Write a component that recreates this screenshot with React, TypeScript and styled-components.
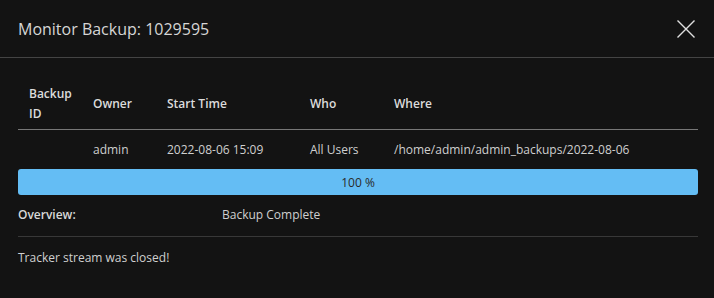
import React from 'react';
import styled, { createGlobalStyle } from 'styled-components';

const GlobalStyle = createGlobalStyle`
  html, body {
    margin: 0;
    padding: 0;
    background: #131313;
  }
  body {
    font-family: "Open Sans", "Noto Sans", sans-serif;
    color: #d8d8d8;
  }
`;

const Modal = styled.div`
  width: 714px;
  height: 298px;
  background: #131313;
  box-sizing: border-box;
`;

const Header = styled.div`
  display: flex;
  align-items: center;
  justify-content: space-between;
  height: 58px;
  padding: 0 18px;
  border-bottom: 1px solid #444;
  box-sizing: border-box;
`;

const Title = styled.h2`
  margin: 0;
  font-size: 16px;
  font-weight: 400;
  color: #d6d6d6;
`;

const CloseButton = styled.button`
  background: none;
  border: none;
  padding: 0;
  width: 20px;
  height: 20px;
  display: flex;
  align-items: center;
  justify-content: center;
  cursor: pointer;
  color: #e0e0e0;
`;

const Body = styled.div`
  padding: 18px 16px 0 18px;
`;

const Table = styled.table`
  width: 680px;
  border-collapse: collapse;
  table-layout: fixed;
  font-size: 12px;
  line-height: 20px;
`;

const Th = styled.th<{ $width?: string }>`
  box-sizing: border-box;
  width: ${({ $width }) => $width || 'auto'};
  text-align: left;
  font-weight: 600;
  color: #dcdcdc;
  padding: 8px 4px 5px 11px;
  vertical-align: middle;
  border-bottom: 1px solid #777;
`;

const Td = styled.td`
  padding: 10px 4px 9px 11px;
  color: #cfcfcf;
  white-space: nowrap;
`;

const ProgressTrack = styled.div`
  width: 680px;
  height: 26px;
  border-radius: 3px;
  background: #64bdf4;
  display: flex;
  align-items: center;
  justify-content: center;
  font-size: 12px;
  color: #2a2a2a;
`;

const OverviewRow = styled.div`
  display: grid;
  grid-template-columns: 204px 1fr;
  width: 680px;
  padding: 10px 0 11px;
  font-size: 12px;
  line-height: 20px;
  border-bottom: 1px solid #383838;
`;

const OverviewLabel = styled.span`
  font-weight: 600;
  color: #d8d8d8;
`;

const OverviewValue = styled.span`
  color: #cfcfcf;
`;

const StatusText = styled.p`
  margin: 0;
  padding-top: 11px;
  font-size: 12px;
  line-height: 20px;
  color: #d0d0d0;
`;

const CloseIcon = () => (
  <svg width="18" height="18" viewBox="0 0 18 18" fill="none" stroke="currentColor" strokeWidth="1.4">
    <path d="M0.5 0.5 L17.5 17.5 M17.5 0.5 L0.5 17.5" />
  </svg>
);

export default function App() {
  return (
    <>
      <GlobalStyle />
      <Modal>
        <Header>
          <Title>Monitor Backup: 1029595</Title>
          <CloseButton aria-label="Close">
            <CloseIcon />
          </CloseButton>
        </Header>
        <Body>
          <Table>
            <thead>
              <tr>
                <Th $width="64px">Backup ID</Th>
                <Th $width="74px">Owner</Th>
                <Th $width="143px">Start Time</Th>
                <Th $width="84px">Who</Th>
                <Th>Where</Th>
              </tr>
            </thead>
            <tbody>
              <tr>
                <Td></Td>
                <Td>admin</Td>
                <Td>2022-08-06 15:09</Td>
                <Td>All Users</Td>
                <Td>/home/admin/admin_backups/2022-08-06</Td>
              </tr>
            </tbody>
          </Table>
          <ProgressTrack>100 %</ProgressTrack>
          <OverviewRow>
            <OverviewLabel>Overview:</OverviewLabel>
            <OverviewValue>Backup Complete</OverviewValue>
          </OverviewRow>
          <StatusText>Tracker stream was closed!</StatusText>
        </Body>
      </Modal>
    </>
  );
}
